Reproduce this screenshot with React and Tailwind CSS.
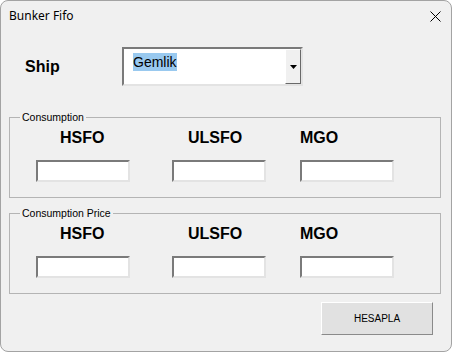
import { useState } from 'react'

const sunken =
  'bg-white border-2 border-t-[#7a7a7a] border-l-[#7a7a7a] border-b-[#e3e3e3] border-r-[#e3e3e3]'

const FuelGroup = ({ title, values, onChange }) => {
  const cols = [
    { key: 'hsfo', label: 'HSFO', pad: 'pl-[24px]', gap: '' },
    { key: 'ulsfo', label: 'ULSFO', pad: 'pl-[16px]', gap: 'ml-[42px]' },
    { key: 'mgo', label: 'MGO', pad: 'pl-0', gap: 'ml-[34px]' },
  ]
  return (
    <fieldset className="ml-[8px] mr-[10px] border border-[#b4b4b4] px-0 pb-[15px]">
      <legend className="ml-[10px] px-[2px] text-[10.5px] leading-[13px] text-black">{title}</legend>
      <div className="flex pl-[26px] pt-[4px]">
        {cols.map((c) => (
          <div key={c.key} className={`w-[94px] flex flex-col ${c.gap}`}>
            <span className={`${c.pad} text-[16px] leading-[20px] font-bold text-black`}>{c.label}</span>
            <input
              type="text"
              value={values[c.key]}
              onChange={(e) => onChange(c.key, e.target.value)}
              className={`mt-[12px] w-[94px] h-[22px] outline-none px-1 text-[12px] ${sunken}`}
            />
          </div>
        ))}
      </div>
    </fieldset>
  )
}

const App = () => {
  const [consumption, setConsumption] = useState({ hsfo: '', ulsfo: '', mgo: '' })
  const [price, setPrice] = useState({ hsfo: '', ulsfo: '', mgo: '' })

  return (
    <div className="w-[452px] h-[352px] bg-white" style={{ fontFamily: '"Liberation Sans", Arial, sans-serif' }}>
      <div className="h-full flex flex-col bg-[#f0f0f0] border border-[#a3a3a3] rounded-[8px] overflow-hidden">
        {/* title bar */}
        <div className="h-[30px] flex items-center justify-between pl-[8px] pr-[10px]">
          <span className="text-[12px] text-black" style={{ fontFamily: '"Noto Sans", sans-serif' }}>Bunker Fifo</span>
          <svg width="11" height="11" viewBox="0 0 11 11" className="text-black">
            <path d="M0.5 0.5 L10.5 10.5 M10.5 0.5 L0.5 10.5" stroke="currentColor" strokeWidth="1" />
          </svg>
        </div>

        {/* ship selector */}
        <div className="mt-[16px] flex items-center pl-[24px]">
          <span className="w-[97px] text-[16px] font-bold text-black">Ship</span>
          <div className={`w-[181px] h-[39px] flex ${sunken}`}>
            <div className="flex-1 pl-[9px] pt-[1px]">
              <span className="bg-[#99c9ef] text-[14px] leading-[18px] text-black inline-block">Gemlik</span>
            </div>
            <div className="w-[16px] h-full bg-[#f0f0f0] border border-t-white border-l-white border-b-[#696969] border-r-[#696969] flex items-center justify-center">
              <svg width="7" height="4" viewBox="0 0 7 4">
                <path d="M0 0 H7 L3.5 4 Z" fill="#000" />
              </svg>
            </div>
          </div>
        </div>

        <div className="mt-[25px]">
          <FuelGroup
            title="Consumption"
            values={consumption}
            onChange={(k, v) => setConsumption({ ...consumption, [k]: v })}
          />
        </div>
        <div className="mt-[9px]">
          <FuelGroup
            title="Consumption Price"
            values={price}
            onChange={(k, v) => setPrice({ ...price, [k]: v })}
          />
        </div>

        <div className="mt-[8px] flex justify-end pr-[18px]">
          <button
            type="button"
            className="w-[112px] h-[33px] bg-[#e1e1e1] border border-t-white border-l-white border-b-[#8a8a8a] border-r-[#8a8a8a] text-[10px] text-black"
          >
            HESAPLA
          </button>
        </div>
      </div>
    </div>
  )
}

export default App
